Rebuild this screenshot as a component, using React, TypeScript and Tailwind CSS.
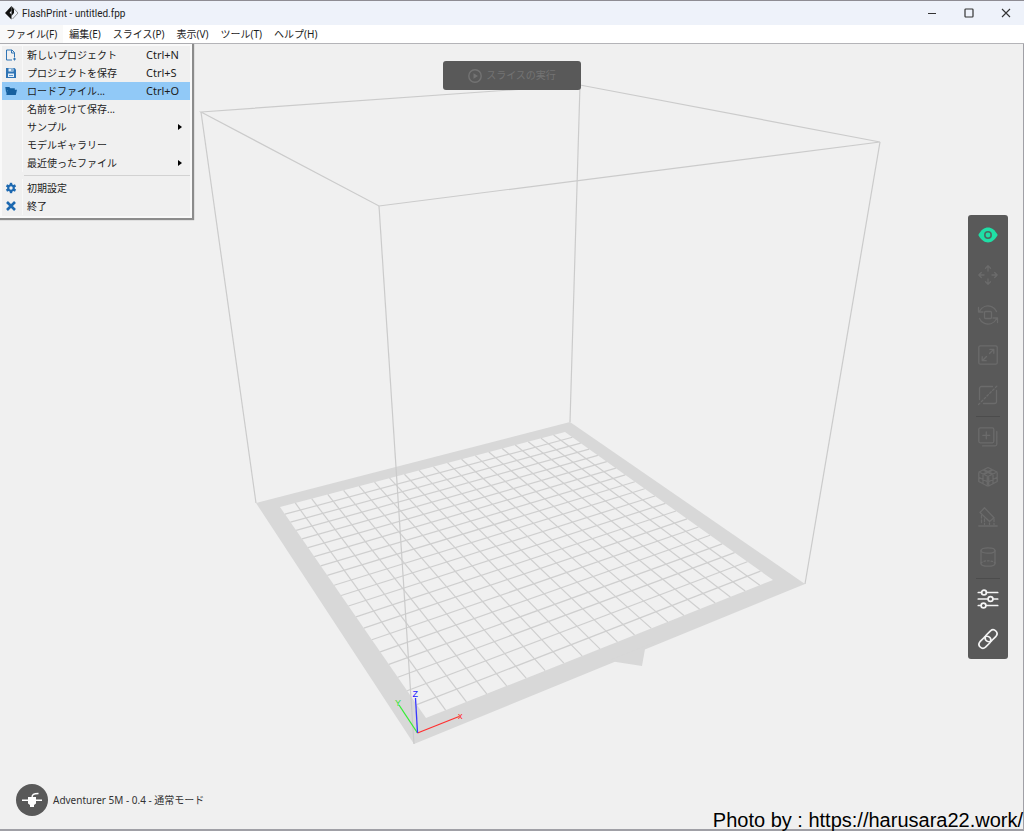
import React from 'react';
import { clsx } from 'clsx';

type Point = [number, number];

interface MenuEntry {
  label: string;
  shortcut?: string;
  icon?: React.ReactNode;
  active?: boolean;
  submenu?: boolean;
}

const MENUS = ['ファイル(F)', '編集(E)', 'スライス(P)', '表示(V)', 'ツール(T)', 'ヘルプ(H)'];

// Build plate, in scene coordinates
const PLATE: Point[] = [[256, 503], [570, 422], [805, 584], [414, 744]];
const GRID: Point[] = [[280, 507], [565, 432], [773, 580], [426, 718]];
const TOP: Point[] = [[201, 112], [580, 85], [880, 142], [379, 206]];
const CELLS = 20;
const EDGE_CELL = 0.92;

const toPoints = (pts: Point[]) => pts.map((p) => p.join(',')).join(' ');

// Perspective map from the unit square onto a quad
function projector([p0, p1, p2, p3]: Point[]) {
  const dx1 = p1[0] - p2[0];
  const dx2 = p3[0] - p2[0];
  const dx3 = p0[0] - p1[0] + p2[0] - p3[0];
  const dy1 = p1[1] - p2[1];
  const dy2 = p3[1] - p2[1];
  const dy3 = p0[1] - p1[1] + p2[1] - p3[1];
  const det = dx1 * dy2 - dx2 * dy1;
  const g = (dx3 * dy2 - dx2 * dy3) / det;
  const h = (dx1 * dy3 - dx3 * dy1) / det;

  return (u: number, v: number): Point => {
    const w = g * u + h * v + 1;
    return [
      ((p1[0] - p0[0] + g * p1[0]) * u + (p3[0] - p0[0] + h * p3[0]) * v + p0[0]) / w,
      ((p1[1] - p0[1] + g * p1[1]) * u + (p3[1] - p0[1] + h * p3[1]) * v + p0[1]) / w,
    ];
  };
}

function Scene() {
  const project = projector(GRID);
  const span = CELLS - 2 + EDGE_CELL * 2;
  const steps = Array.from({ length: CELLS - 1 }, (_, i) => (i + EDGE_CELL) / span);
  const lines = steps.flatMap((t) => [
    [project(t, 0), project(t, 1)],
    [project(0, t), project(1, t)],
  ]);

  return (
    <svg viewBox="0 44 1023 785" className="absolute inset-0 h-full w-full" aria-hidden="true">
      <polygon points={toPoints(PLATE)} fill="#d8d8d8" />
      <polygon points="610,660 616,662 642,666 645,649 660,640" fill="#d8d8d8" />
      <polygon points={toPoints(GRID)} fill="#f0f0f0" />
      <g stroke="#cfcfcf" strokeWidth="1.2">
        {lines.map(([a, b], i) => (
          <line key={i} x1={a[0]} y1={a[1]} x2={b[0]} y2={b[1]} />
        ))}
      </g>

      {/* Build volume */}
      <g stroke="#cbcbcb" strokeWidth="1.2" fill="none">
        <polygon points={toPoints(TOP)} />
        {TOP.map((p, i) => (
          <line key={i} x1={p[0]} y1={p[1]} x2={PLATE[i][0]} y2={PLATE[i][1]} />
        ))}
      </g>

      {/* Axes */}
      <g strokeWidth="1.3" fontSize="9" className="font-['Liberation_Sans',sans-serif]">
        <line x1="417.5" y1="733" x2="459" y2="716.5" stroke="#ff3030" />
        <line x1="417.5" y1="733" x2="399" y2="705" stroke="#35ee35" />
        <line x1="417.5" y1="733" x2="415.5" y2="698" stroke="#3838ff" />
        <text x="458" y="719" fill="#ff2020">x</text>
        <text x="395" y="706" fill="#35e035">Y</text>
        <text x="412.5" y="697" fill="#2020ff">Z</text>
      </g>
    </svg>
  );
}

const NewIcon = () => (
  <svg viewBox="0 0 12 12" className="h-3 w-3" fill="none" stroke="#2f74b5" strokeWidth="1">
    <path d="M7 11H1.5V1h5.500l2.500 2.500V8M6.500 1v3h3M9.500 8.500v3M8 10h3" />
  </svg>
);

const SaveIcon = () => (
  <svg viewBox="0 0 12 12" className="h-3 w-3">
    <path d="M1 1h8.500L11 2.500V11H1z" fill="#2f74b5" />
    <path d="M3.500 1.500h5v3h-5zM3 6.500h6v3.500H3z" fill="#e4eff9" />
    <path d="M6.500 2h1v2h-1zM4 8h4v.8H4z" fill="#2f74b5" />
  </svg>
);

const FolderIcon = () => (
  <svg viewBox="0 0 12 12" className="h-3 w-3" fill="#16609f">
    <path d="M.3 2h4l1 1.200h4.500V5H2.300L1.300 9z" />
    <path d="M2.500 4.800H12L10.800 10H1.300z" />
  </svg>
);

const GearIcon = () => (
  <svg viewBox="0 0 12 12" className="h-3 w-3">
    <g fill="#1c68b0">
      <circle cx="6" cy="6" r="3.8" />
      <path d="M4.800.8h2.400v10.400H4.800z" />
      <path d="M4.800.8h2.400v10.400H4.800z" transform="rotate(60 6 6)" />
      <path d="M4.800.8h2.400v10.400H4.800z" transform="rotate(120 6 6)" />
    </g>
    <circle cx="6" cy="6" r="1.7" fill="#f0f0f0" />
  </svg>
);

const CloseIcon = () => (
  <svg viewBox="0 0 12 12" className="h-3 w-3" stroke="#1c68b0" strokeWidth="2.6">
    <path d="M2 2l8 8M10 2l-8 8" />
  </svg>
);

const FILE_MENU: MenuEntry[][] = [
  [
    { label: '新しいプロジェクト', shortcut: 'Ctrl+N', icon: <NewIcon /> },
    { label: 'プロジェクトを保存', shortcut: 'Ctrl+S', icon: <SaveIcon /> },
    { label: 'ロードファイル...', shortcut: 'Ctrl+O', icon: <FolderIcon />, active: true },
    { label: '名前をつけて保存...' },
    { label: 'サンプル', submenu: true },
    { label: 'モデルギャラリー' },
    { label: '最近使ったファイル', submenu: true },
  ],
  [
    { label: '初期設定', icon: <GearIcon /> },
    { label: '終了', icon: <CloseIcon /> },
  ],
];

function MenuRow({ label, shortcut, icon, active, submenu }: MenuEntry) {
  return (
    <button
      role="menuitem"
      className={clsx('flex h-[18px] w-full items-center text-left', active && 'bg-[#91c9f7]')}
    >
      <span className={clsx('flex h-full w-[21px] items-center border-r pl-[3px]', active ? 'border-transparent' : 'border-[#f8f8f8]')}>
        {icon}
      </span>
      <span className="flex-1 whitespace-nowrap pl-1">{label}</span>
      {shortcut && <span className="w-11 text-[11px]">{shortcut}</span>}
      {submenu && (
        <svg viewBox="0 0 4 6" className="mr-2 h-1.5 w-1" fill="#000">
          <path d="M0 0l4 3-4 3z" />
        </svg>
      )}
    </button>
  );
}

function FileMenu() {
  return (
    <div
      role="menu"
      className="absolute left-0 top-[19px] z-20 w-48 border-2 border-[#f9f9f9] bg-[#f0f0f0] pb-px shadow-[1px_1px_1px_1px_#8c8c8c]"
    >
      {FILE_MENU.map((group, i) => (
        <React.Fragment key={i}>
          {i > 0 && <hr className="my-[3px] ml-[22px] border-[#d2d2d2]" />}
          {group.map((entry) => (
            <MenuRow key={entry.label} {...entry} />
          ))}
        </React.Fragment>
      ))}
    </div>
  );
}

function TitleBar() {
  return (
    <header className="flex h-6 items-center bg-[#eef2fa] pl-[5px]">
      <svg viewBox="0 0 14 14" className="h-3.5 w-3.5">
        <path d="M6.500 0v4.500L4.500 7l2 1v5.500L0 7z" fill="#111" />
        <path d="M6.500 0L9 3v4L6.500 10z" fill="#111" />
        <path d="M8 1.500L13 7l-5.500 6" fill="none" stroke="#777" strokeWidth=".8" />
      </svg>
      <h1 className="flex-1 pl-[3px] font-['Roboto',sans-serif]">FlashPrint - untitled.fpp</h1>
      <div className="flex">
        <button aria-label="最小化" className="flex h-6 w-[37px] items-center justify-center">
          <svg viewBox="0 0 10 10" className="h-2.5 w-2.5" stroke="#333">
            <path d="M1 5.500h8" />
          </svg>
        </button>
        <button aria-label="最大化" className="flex h-6 w-[37px] items-center justify-center">
          <svg viewBox="0 0 10 10" className="h-2.5 w-2.5" fill="none" stroke="#333" strokeWidth="1.2">
            <rect x="1" y="1" width="8" height="8" rx=".8" />
          </svg>
        </button>
        <button aria-label="閉じる" className="flex h-6 w-[37px] items-center justify-center">
          <svg viewBox="0 0 10 10" className="h-2.5 w-2.5" stroke="#333" strokeWidth="1.1">
            <path d="M1 1l8 8M9 1L1 9" />
          </svg>
        </button>
      </div>
    </header>
  );
}

function MenuBar() {
  return (
    <nav className="relative flex h-[19px] items-center border-b border-[#b4b4b8] bg-white">
      {MENUS.map((label, i) => (
        <button
          key={label}
          className={clsx('h-full whitespace-nowrap px-1.5', i === 0 && 'bg-[#f9f9f9]')}
        >
          {label}
        </button>
      ))}
      <FileMenu />
    </nav>
  );
}

interface Tool {
  name: string;
  tone: string;
  drawing: React.ReactNode;
}

const OFF = 'text-[#6b6b6b]';
const ON = 'text-[#f4f4f4]';

const TOOL_GROUPS: Tool[][] = [
  [
    {
      name: '表示',
      tone: 'text-[#1fdfa6]',
      drawing: (
        <>
          <path d="M.3 10C3 5 6.500 2.600 10 2.600S17 5 19.700 10C17 15 13.500 17.400 10 17.400S3 15 .3 10z" fill="currentColor" stroke="none" />
          <circle cx="10" cy="10" r="3.2" stroke="#4d6a60" strokeWidth="1.6" />
        </>
      ),
    },
    {
      name: '移動',
      tone: OFF,
      drawing: (
        <path d="M10 .8v5.200M7.500 3.300L10 .8l2.500 2.500M10 19.200V14M7.500 16.700l2.500 2.500 2.500-2.500M.8 10H6M3.300 7.500L.8 10l2.500 2.500M19.200 10H14M16.700 7.500l2.500 2.500-2.500 2.500" />
      ),
    },
    {
      name: '回転',
      tone: OFF,
      drawing: (
        <>
          <rect x="6.5" y="6.5" width="7" height="7" rx="1" />
          <path d="M.5 2.500v4.500H5M1.300 6.500C4 1.500 9 0 13.500 1.600c2.200.8 4 2.500 5 5M19.500 17.500V13H15M18.700 13.500c-2.700 5-7.700 6.500-12.200 4.900-2.200-.8-4-2.500-5-5" />
        </>
      ),
    },
    {
      name: 'スケール',
      tone: OFF,
      drawing: (
        <>
          <rect x=".8" y=".8" width="18.4" height="18.4" rx="1.5" />
          <path d="M11.500 8.500l4-4M11.800 4.300h4v4M8.500 11.500l-4 4M4.200 11.700v4h4" />
        </>
      ),
    },
    {
      name: 'カット',
      tone: OFF,
      drawing: (
        <>
          <path d="M1.500 14.500v-11a2 2 0 0 1 2-2h11M18.500 5.500v11a2 2 0 0 1-2 2h-11" />
          <path d="M.5 19.500l19-19" strokeDasharray="2 2" />
        </>
      ),
    },
  ],
  [
    {
      name: '複製',
      tone: OFF,
      drawing: (
        <>
          <rect x=".8" y=".8" width="15" height="15" rx="1.5" />
          <path d="M8.300 4.800v7M4.800 8.300h7M18.800 4.500v12.800a1.500 1.500 0 0 1-1.500 1.500H4.500" />
        </>
      ),
    },
    {
      name: '自動配置',
      tone: OFF,
      drawing: (
        <>
          <path d="M10 .5l4 2-4 2-4-2zM5 3l4 2-4 2-4-2zM15 3l4 2-4 2-4-2zM10 5.500l4 2-4 2-4-2z" />
          <path d="M.8 6v8.500L9.300 19v-8.500M19.200 6v8.500L10.700 19v-8.500M5 8.500v8M15 8.500v8M.8 10.300l8.500 4.500M19.200 10.300l-8.500 4.500" />
        </>
      ),
    },
    {
      name: 'サポート',
      tone: OFF,
      drawing: (
        <>
          <path d="M6.500.8l9.500 10-4.500 3.700-9.500-9zM.8 19h18.400" />
          <path d="M3.500 8.500v9M6.500 12v5.500M11.500 16v1.500M16 12v5.500" strokeDasharray="2.500 2" />
        </>
      ),
    },
    {
      name: '円柱',
      tone: OFF,
      drawing: (
        <>
          <ellipse cx="10" cy="3.500" rx="7" ry="2.700" />
          <path d="M3 3.500v13c0 1.500 3 2.700 7 2.700s7-1.200 7-2.700v-13" />
          <path d="M3 16c1.500-1.600 4-2.200 7-2.200s5.500.6 7 2.200" strokeDasharray="1.5 2" />
        </>
      ),
    },
  ],
  [
    {
      name: '設定',
      tone: ON,
      drawing: (
        <g strokeWidth="1.7">
          <path d="M.3 3.500h3.200M8.500 3.500h11.200M.3 10h9.700M15 10h4.700M.3 16.500h2.700M8 16.500h11.700" />
          <circle cx="6" cy="3.5" r="2.4" />
          <circle cx="12.5" cy="10" r="2.4" />
          <circle cx="5.5" cy="16.5" r="2.4" />
        </g>
      ),
    },
    {
      name: '接続',
      tone: ON,
      drawing: (
        <g strokeWidth="1.7">
          <path d="M8 11.300a4.200 4.200 0 0 0 5.800.2l4.200-4.200A3.900 3.900 0 0 0 12.500 1.800L8.300 6a4 4 0 0 0-.8 4.600" />
          <path d="M12 8.700a4.200 4.200 0 0 0-5.800-.2L2 12.700a3.900 3.900 0 0 0 5.500 5.500l4.200-4.200a4 4 0 0 0 .8-4.600" />
        </g>
      ),
    },
  ],
];

function Toolbar() {
  return (
    <aside className="relative flex w-10 flex-col rounded-[3px] bg-[#595959]">
      {TOOL_GROUPS.map((group, i) => (
        <React.Fragment key={i}>
          {i > 0 && <hr className="mx-2 mt-px h-px border-0 bg-[#4c4c4c]" />}
          {group.map(({ name, tone, drawing }) => (
            <button key={name} aria-label={name} className={clsx('flex h-10 items-center justify-center', tone)}>
              <svg
                viewBox="0 0 20 20"
                className="h-5 w-5 overflow-visible"
                fill="none"
                stroke="currentColor"
                strokeWidth="1.3"
                strokeLinecap="round"
                strokeLinejoin="round"
              >
                {drawing}
              </svg>
            </button>
          ))}
        </React.Fragment>
      ))}
    </aside>
  );
}

function MachineStatus() {
  return (
    <div className="flex items-center gap-[5px] text-[#333]">
      <button aria-label="プリンター" className="flex h-8 w-8 items-center justify-center rounded-full bg-[#595959]">
        <svg viewBox="0 0 20 20" className="h-5 w-5" fill="none" stroke="#fff" strokeWidth="1.4">
          <path d="M0 10.200h20M10 8c0-3.500 1.500-4.500 6.500-4.500" />
          <path d="M6 7h8v6.500L12 15v2H8v-2l-2-1.500z" fill="#fff" stroke="none" />
        </svg>
      </button>
      <span>Adventurer 5M - 0.4 - 通常モード</span>
    </div>
  );
}

export default function App() {
  return (
    <div className="flex min-h-screen flex-col border-t border-[#8e8c93] bg-[#f0f0f0] font-['Noto_Sans','Noto_Sans_CJK_JP',sans-serif] text-[10px] text-[#1c1c1c]">
      <TitleBar />
      <MenuBar />
      <main className="relative flex flex-1 flex-col border-b-2 border-r border-[#a0a0a6]">
        <Scene />
        <div className="relative flex flex-1 flex-col justify-between pb-[13px] pl-4 pr-[15px] pt-[17px]">
          <button
            disabled
            className="flex h-[29px] w-[138px] items-center justify-center gap-1 self-center rounded-[3px] bg-[#595959] text-[#737373]"
          >
            <svg viewBox="0 0 14 14" className="h-3.5 w-3.5" fill="none" stroke="currentColor" strokeWidth="1.4">
              <circle cx="7" cy="7" r="6.2" />
              <path d="M5.500 4.200L10 7l-4.500 2.800z" fill="currentColor" stroke="none" />
            </svg>
            スライスの実行
          </button>
          <div className="-my-24 flex justify-end">
            <Toolbar />
          </div>
          <MachineStatus />
        </div>
        <p className="absolute -bottom-px right-0 whitespace-nowrap font-['Liberation_Sans',sans-serif] text-[20px] leading-5 text-black">
          Photo by : https://harusara22.work/
        </p>
      </main>
    </div>
  );
}
